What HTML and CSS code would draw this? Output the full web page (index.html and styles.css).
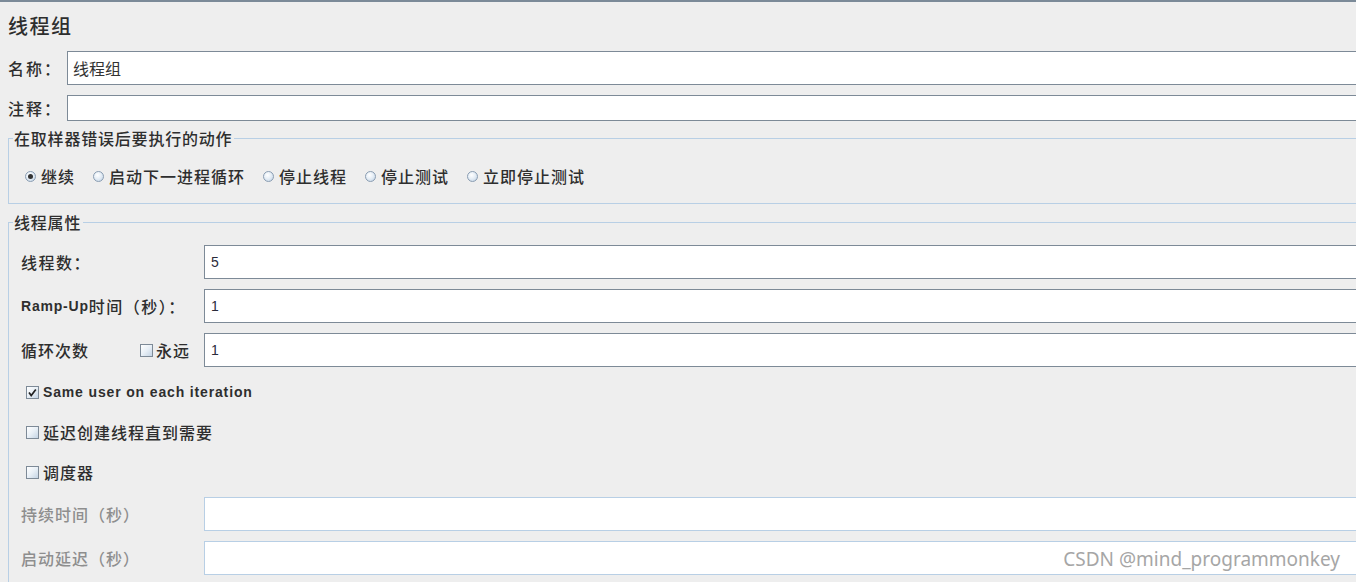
FILE: index.html
```html
<!DOCTYPE html>
<html lang="zh-CN">
<head>
<meta charset="utf-8">
<title>线程组</title>
<link rel="stylesheet" href="styles.css">
</head>
<body>
<div class="topbar"></div>
<div class="page">
  <h1 class="title">线程组</h1>
  <div class="field-row name-row">
    <span class="lbl">名称：</span>
    <div class="input">线程组</div>
  </div>
  <div class="field-row comment-row">
    <span class="lbl">注释：</span>
    <div class="input"></div>
  </div>

  <fieldset class="group on-error">
    <legend>在取样器错误后要执行的动作</legend>
    <div class="radios">
      <span class="radio checked"><i class="circle"></i>继续</span>
      <span class="radio"><i class="circle"></i>启动下一进程循环</span>
      <span class="radio"><i class="circle"></i>停止线程</span>
      <span class="radio"><i class="circle"></i>停止测试</span>
      <span class="radio"><i class="circle"></i>立即停止测试</span>
    </div>
  </fieldset>

  <fieldset class="group threads">
    <legend>线程属性</legend>
    <div class="props">
      <div class="prop-row first">
        <span class="plabel">线程数：</span>
        <div class="input num">5</div>
      </div>
      <div class="prop-row">
        <span class="plabel"><b class="latin">Ramp-Up</b>时间（秒）：</span>
        <div class="input num">1</div>
      </div>
      <div class="prop-row">
        <span class="plabel loop"><span class="loop-text">循环次数</span><span class="check inline"><i class="box"></i>永远</span></span>
        <div class="input num">1</div>
      </div>
      <div class="check-row first-check">
        <span class="check"><i class="box checked"><svg viewBox="0 0 13 13" width="13" height="13"><path d="M3 6.5 L5.2 9.5 L9.8 3.5" fill="none" stroke="#222" stroke-width="1.7"/></svg></i><b class="latin same">Same user on each iteration</b></span>
      </div>
      <div class="check-row">
        <span class="check"><i class="box"></i>延迟创建线程直到需要</span>
      </div>
      <div class="check-row">
        <span class="check"><i class="box"></i>调度器</span>
      </div>
      <div class="prop-row disabled gap5">
        <span class="plabel">持续时间（秒）</span>
        <div class="input num"></div>
      </div>
      <div class="prop-row disabled">
        <span class="plabel">启动延迟（秒）</span>
        <div class="input num"></div>
      </div>
    </div>
  </fieldset>
</div>
<div class="watermark">CSDN @mind_programmonkey</div>
</body>
</html>
```

FILE: styles.css
```css
html, body {
  margin: 0;
  padding: 0;
  background: #eeeeee;
  height: 582px;
  overflow: hidden;
}
body {
  position: relative;
  font-family: "Noto Sans CJK SC", "Noto Sans", sans-serif;
  font-weight: 500;
  color: #2e2e2e;
}
.topbar {
  height: 2px;
  background: #7b8a98;
}
.page {
  width: 1400px;
}
.title {
  margin: 10px 0 0 8px;
  height: 28px;
  font-size: 20px;
  font-weight: 500;
  line-height: 28px;
  letter-spacing: 1.5px;
  color: #2e2e2e;
}
.field-row {
  display: flex;
  align-items: center;
  margin-left: 8px;
}
.name-row {
  margin-top: 11px;
}
.comment-row {
  margin-top: 10px;
}
.lbl {
  width: 59px;
  font-size: 16px;
  line-height: 20px;
  letter-spacing: 2px;
}
.input {
  flex: 1;
  box-sizing: border-box;
  background: #ffffff;
  border: 1px solid #7d8a97;
  display: flex;
  align-items: center;
  padding-left: 5px;
  font-size: 16px;
  font-weight: normal;
  color: #333;
}
.name-row .input {
  height: 34px;
}
.comment-row .input {
  height: 26px;
}
.group {
  margin: 8px 0 0 8px;
  padding: 0;
  border: 1px solid #b8cfe5;
  min-width: 0;
}
.group legend {
  padding: 0 2px 0 1px;
  margin-left: 4px;
  font-size: 16px;
  line-height: 18px;
  letter-spacing: 0.8px;
  color: #2e2e2e;
}
.radios {
  display: flex;
  gap: 18px;
  padding: 19px 0 17px 16px;
}
.radio {
  display: flex;
  align-items: center;
  gap: 5px;
  font-size: 16px;
  line-height: 20px;
  letter-spacing: 1px;
}
.circle {
  position: relative;
  width: 11px;
  height: 11px;
  box-sizing: border-box;
  border-radius: 50%;
  border: 1px solid #8a9db2;
  background: radial-gradient(circle at 40% 35%, #ffffff 0%, #e6eef6 45%, #bccfe2 100%);
}
.radio.checked .circle::after {
  content: "";
  position: absolute;
  left: 2px;
  top: 2px;
  width: 5px;
  height: 5px;
  border-radius: 50%;
  background: #333;
}
.threads {
  margin-top: 9px;
}
.props {
  padding: 14px 0 20px 12px;
}
.prop-row {
  display: flex;
  align-items: center;
  height: 34px;
  margin-top: 10px;
}
.prop-row.first {
  margin-top: 0;
}
.prop-row.gap5 {
  margin-top: 5px;
}
.plabel {
  width: 183px;
  flex: none;
  font-size: 16px;
  line-height: 20px;
  letter-spacing: 1.5px;
  display: flex;
  align-items: center;
}
.latin {
  font-family: "Liberation Sans", Arial, sans-serif;
  font-weight: bold;
  font-size: 14px;
  letter-spacing: 0.8px;
  color: #2e2e2e;
}
.loop-text {
  width: 119px;
  letter-spacing: 1px;
}
.input.num {
  height: 34px;
  padding-left: 6px;
  font-family: "Liberation Sans", Arial, sans-serif;
  font-size: 14px;
  color: #2b2b3a;
}
.disabled .plabel {
  color: #8e8e8e;
  letter-spacing: 1px;
}
.disabled .input {
  border-color: #b8cfe5;
}
.check-row {
  display: flex;
  align-items: center;
  height: 40px;
  padding-left: 5px;
}
.first-check {
  margin-top: 5px;
}
.check {
  display: flex;
  align-items: center;
  gap: 4px;
  font-size: 16px;
  line-height: 20px;
  letter-spacing: 1px;
}
.check.inline {
  gap: 3px;
}
.box {
  width: 13px;
  height: 13px;
  box-sizing: border-box;
  border: 1px solid #7d8a97;
  background: linear-gradient(135deg, #ffffff 0%, #e8eff6 50%, #c4d4e4 100%);
  display: flex;
  align-items: center;
  justify-content: center;
}
.box svg {
  display: block;
  flex: none;
  margin: -1px;
}
.same {
  letter-spacing: 0.85px;
}
.watermark {
  position: absolute;
  right: 16px;
  top: 545px;
  font-family: "Noto Sans", "Open Sans", sans-serif;
  font-weight: normal;
  font-size: 19px;
  line-height: 28px;
  color: #a6a6a6;
}
```
